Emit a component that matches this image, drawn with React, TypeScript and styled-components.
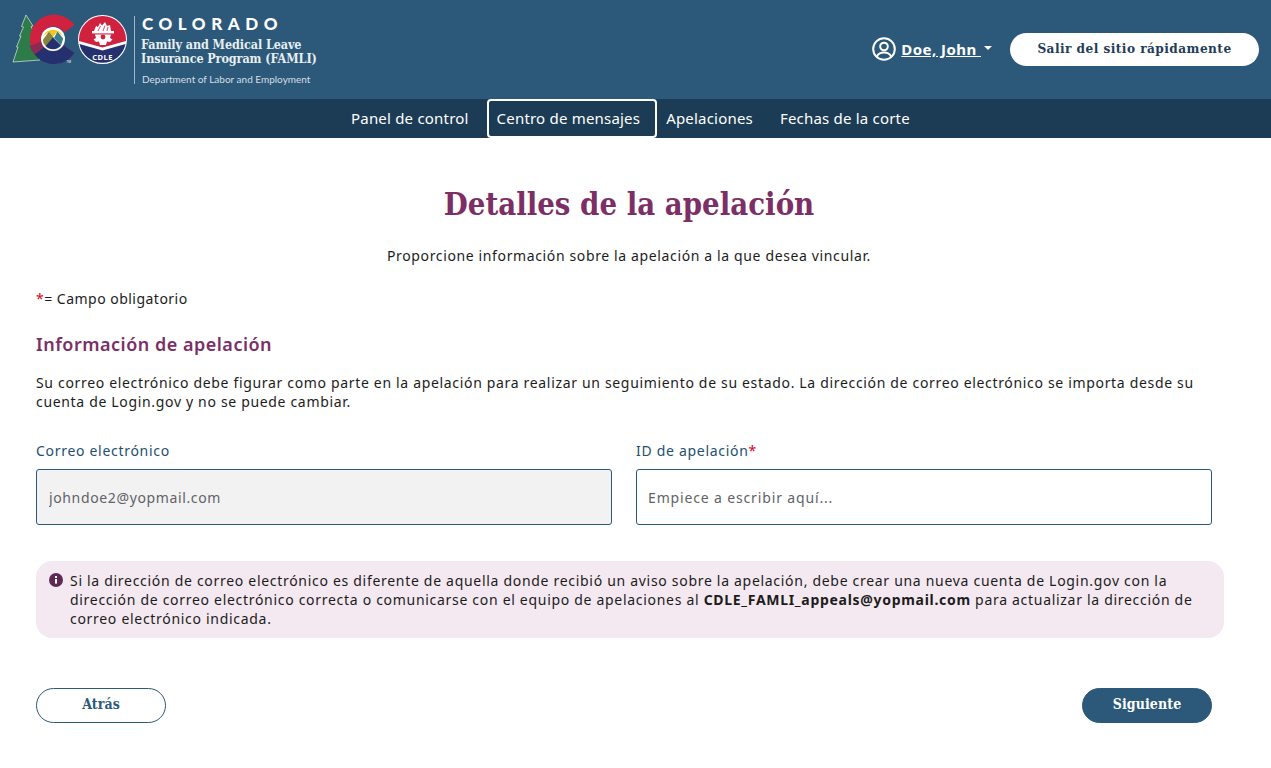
import styled, { createGlobalStyle } from 'styled-components';

const GlobalStyle = createGlobalStyle`
  html, body {
    margin: 0;
    padding: 0;
    background: #fff;
    font-family: 'Noto Sans', sans-serif;
    color: #1c1c1c;
    letter-spacing: 0.63px;
  }
`;

const slab = `'DejaVu Serif Condensed', 'DejaVu Serif', serif`;

const Header = styled.header`
  height: 99px;
  background: #2c5979;
  display: flex;
  justify-content: space-between;
  padding: 0 12px;
  box-sizing: border-box;
  letter-spacing: 0;
`;

const Brand = styled.div`
  display: flex;
  align-items: flex-start;
  padding-top: 14px;
`;

const BrandDivider = styled.div`
  width: 1px;
  height: 68px;
  background: #9fb5c5;
  margin: 2px 7px 0 6px;
`;

const BrandText = styled.div`
  display: flex;
  flex-direction: column;
  color: #fff;
  padding-top: 1px;
`;

const BrandState = styled.div`
  font: 900 17px/17px 'Lato', sans-serif;
  letter-spacing: 5.55px;
  margin-bottom: 6px;
`;

const BrandProgram = styled.div`
  font: 700 12.5px/14px ${slab};
  color: #e8eef2;
  white-space: nowrap;
  letter-spacing: -0.1px;
  margin-left: -1px;
`;

const BrandDept = styled.div`
  font: 400 10px/12px 'Lato', sans-serif;
  color: #d5dfe6;
  margin-top: 7px;
`;

const HeaderActions = styled.div`
  display: flex;
  align-items: center;
  padding-bottom: 1px;
`;

const UserMenu = styled.a`
  display: flex;
  align-items: center;
  color: #fff;
  font: 700 15px/20px 'Noto Sans', sans-serif;
  letter-spacing: 0.45px;
  margin-right: 17px;
`;

const UserName = styled.span`
  text-decoration: underline;
  white-space: pre;
  margin: 0 3px 0 5px;
`;

const Caret = styled.span`
  width: 0;
  height: 0;
  border-left: 4px solid transparent;
  border-right: 4px solid transparent;
  border-top: 4px solid #fff;
  margin: -3px 1px 0 0;
`;

const QuickExit = styled.button`
  width: 249px;
  height: 33px;
  border: none;
  border-radius: 17px;
  background: #fff;
  color: #1f3d57;
  font: 700 13.5px/16px ${slab};
  letter-spacing: 0.45px;
  padding: 0 0 2px;
`;

const NavBar = styled.nav`
  height: 39px;
  background: #1c3c56;
  display: flex;
  align-items: stretch;
  padding-left: 340px;
  letter-spacing: 0;
`;

const NavItem = styled.a<{ $focused?: boolean; $gap: number }>`
  display: flex;
  align-items: center;
  box-sizing: border-box;
  color: #fff;
  font: 400 15px/20px 'Noto Sans', sans-serif;
  letter-spacing: 0.2px;
  padding: ${({ $focused }) => ($focused ? '0 15px 2px 8px' : '0 9px 2px')};
  margin-right: ${({ $gap }) => $gap}px;
  border: 2px solid ${({ $focused }) => ($focused ? '#fff' : 'transparent')};
  border-radius: 4px;
  white-space: nowrap;
`;

const Main = styled.main`
  padding: 0 47px 0 36px;
`;

const Title = styled.h1`
  margin: 45px 0 0;
  padding-right: 2px;
  text-align: center;
  font: 700 30.8px/42px ${slab};
  letter-spacing: 0;
  color: #7b2f66;
`;

const Lead = styled.p`
  margin: 20px 0 0;
  padding-right: 2px;
  text-align: center;
  font-size: 14px;
  line-height: 22px;
`;

const Required = styled.span`
  color: #e0001b;
`;

const RequiredNote = styled.p`
  margin: 21px 0 0;
  font-size: 14px;
  line-height: 22px;
  letter-spacing: 0.48px;
`;

const SectionTitle = styled.h2`
  margin: 21px 0 0;
  font: 600 18px/26px 'Noto Sans', sans-serif;
  letter-spacing: 0.5px;
  color: #7b2f66;
`;

const Body = styled.p`
  margin: 16px 0 0;
  font-size: 14px;
  line-height: 19px;
  letter-spacing: 0.67px;
`;

const FieldGrid = styled.div`
  display: grid;
  grid-template-columns: 576px 576px;
  column-gap: 24px;
  margin-top: 29px;
`;

const Field = styled.label`
  display: flex;
  flex-direction: column;
`;

const FieldLabel = styled.span`
  font-size: 14px;
  line-height: 22px;
  color: #24506f;
  margin-bottom: 7px;
  letter-spacing: 0.7px;
`;

const Input = styled.input`
  box-sizing: border-box;
  height: 56px;
  border: 1px solid #2c5979;
  border-radius: 3px;
  padding: 0 11px;
  font: 14px 'Noto Sans', sans-serif;
  letter-spacing: 0.63px;
  color: #5f6368;
  background: #fff;
  &:disabled {
    background: #f2f2f2;
    padding-left: 12px;
  }
  &::placeholder {
    color: #5f6368;
    opacity: 1;
    letter-spacing: 0.85px;
  }
`;

const Alert = styled.div`
  display: flex;
  align-items: flex-start;
  margin: 36px 0 0;
  padding: 10px 20px 10px 13px;
  background: #f4e9f1;
  border-radius: 16px;
  font-size: 14px;
  line-height: 19px;
  letter-spacing: 0.7px;
`;

const AlertIcon = styled.svg`
  flex: none;
  width: 14px;
  height: 14px;
  margin: 2px 7px 0 0;
`;

const Actions = styled.div`
  display: flex;
  justify-content: space-between;
  margin-top: 50px;
  padding: 0 12px 45px 0;
`;

const Button = styled.button<{ $primary?: boolean }>`
  width: 130px;
  height: 35px;
  border: 1px solid #2c5979;
  border-radius: 18px;
  background: ${({ $primary }) => ($primary ? '#2c5979' : '#fff')};
  color: ${({ $primary }) => ($primary ? '#fff' : '#2c5979')};
  font: 700 14px/16px ${slab};
  letter-spacing: 0.1px;
  padding: 0 0 3px;
`;

const Logo = () => (
  <svg width="116" height="52" viewBox="12 14 116 52">
    {/* tree, tucked behind the C */}
    <path
      d="M26 15 L33 26 L31 26.5 L36 36 L40 60 L13 62 L18 47 L16.5 47 L21 36 L19.5 36 L23.5 27 L21.5 26.5 Z"
      fill="#2e7b4a"
      stroke="#dfe8e4"
      strokeWidth="0.7"
    />
    {/* C: red upper arm, plum tail, navy lower arm */}
    <path d="M74.5 25 A24.5 24.5 0 1 0 74.5 53 L64 45.5 A12.5 12.5 0 1 1 64 32.5 Z" fill="#d0213f" />
    <path d="M34.5 54.5 A24.5 24.5 0 0 0 74.5 53 L64 45.5 A12.5 12.5 0 0 1 44 47 Z" fill="#25306f" />
    <path d="M29.7 46 L42 41 L44 47 L34.5 54.5 A24.5 24.5 0 0 1 29.7 46 Z" fill="#8a2a55" />
    {/* sun and mountains */}
    <circle cx="53" cy="39" r="12" fill="#fff" />
    <path d="M43.5 36 A10.3 10.3 0 0 1 62.5 36 L57.5 31.5 L53 36.5 L49 31.5 Z" fill="#f5c518" />
    <path d="M42.8 40 L49 31.5 L54 38 L45.5 46 A10.3 10.3 0 0 1 42.8 40 Z" fill="#84873b" />
    <path d="M45.5 46 L53 37.5 L61 45.5 A10.3 10.3 0 0 1 45.5 46 Z" fill="#25306f" />
    <path d="M57.5 31.5 L63.2 38.5 L61 45.5 L54 38 Z" fill="#3c7d8b" />
    <text x="66.5" y="63" fontFamily="'Noto Sans', sans-serif" fontSize="3" fill="#fff">TM</text>
    {/* CDLE seal */}
    <circle cx="102.5" cy="39.5" r="24.5" fill="#fff" />
    <path d="M79 39.5 A23.5 23.5 0 0 1 126 39.5 L126 41 L102.5 47.5 L79 41 Z" fill="#d0213f" />
    <path d="M79.5 44 L102.5 50.5 L125.5 44 A23.5 23.5 0 0 1 79.5 44 Z" fill="#25306f" />
    <path d="M94 31 L96 26 L98 27 L100 23 L102 25.5 L105 22 L107 26 L110 25 L111 31 Z" fill="#fff" />
    <path d="M98 31 L100.5 26 M103 31 L105 25.5 M107 31 L108 27" stroke="#d0213f" strokeWidth="0.8" />
    <rect x="92" y="31" width="22" height="2.4" fill="#fff" />
    <path d="M95 34.5 H111 L110 38 L112.5 39.5 L110 42 L107 41.5 L106 45 H100 L99 41.5 L96 42 L93.5 39.5 L96 38 Z" fill="#fff" />
    <circle cx="103" cy="37" r="2.4" fill="#d0213f" />
    <text x="102.5" y="59.5" textAnchor="middle" fontFamily="'Noto Sans', sans-serif" fontSize="7.5" fontWeight="700" letterSpacing="0.5" fill="#fff">CDLE</text>
  </svg>
);

const UserIcon = () => (
  <svg width="24" height="24" viewBox="0 0 24 24" fill="none" stroke="#fff" strokeWidth="2">
    <circle cx="12" cy="12" r="10.8" />
    <circle cx="12" cy="9.5" r="3.8" />
    <path d="M5 19.5 C6.5 16 9 15.6 12 15.6 C15 15.6 17.5 16 19 19.5" />
  </svg>
);

const App = () => (
  <>
    <GlobalStyle />
    <Header>
      <Brand>
        <Logo />
        <BrandDivider />
        <BrandText>
          <BrandState>COLORADO</BrandState>
          <BrandProgram>Family and Medical Leave</BrandProgram>
          <BrandProgram>Insurance Program (FAMLI)</BrandProgram>
          <BrandDept>Department of Labor and Employment</BrandDept>
        </BrandText>
      </Brand>
      <HeaderActions>
        <UserMenu>
          <UserIcon />
          <UserName>Doe, John </UserName>
          <Caret />
        </UserMenu>
        <QuickExit>Salir del sitio rápidamente</QuickExit>
      </HeaderActions>
    </Header>
    <NavBar>
      <NavItem $gap={7}>Panel de control</NavItem>
      <NavItem $focused $gap={-2}>Centro de mensajes</NavItem>
      <NavItem $gap={5}>Apelaciones</NavItem>
      <NavItem $gap={0}>Fechas de la corte</NavItem>
    </NavBar>
    <Main>
      <Title>Detalles de la apelación</Title>
      <Lead>Proporcione información sobre la apelación a la que desea vincular.</Lead>
      <RequiredNote><Required>*</Required>= Campo obligatorio</RequiredNote>
      <SectionTitle>Información de apelación</SectionTitle>
      <Body>
        Su correo electrónico debe figurar como parte en la apelación para realizar un seguimiento de su estado. La dirección de correo electrónico se importa desde su cuenta de Login.gov y no se puede cambiar.
      </Body>
      <FieldGrid>
        <Field>
          <FieldLabel>Correo electrónico</FieldLabel>
          <Input disabled value="johndoe2@yopmail.com" />
        </Field>
        <Field>
          <FieldLabel>ID de apelación<Required>*</Required></FieldLabel>
          <Input placeholder="Empiece a escribir aquí..." />
        </Field>
      </FieldGrid>
      <Alert>
        <AlertIcon viewBox="0 0 14 14">
          <circle cx="7" cy="7" r="7" fill="#5e2a55" />
          <rect x="6" y="6" width="2" height="4.6" fill="#fff" />
          <rect x="6" y="3" width="2" height="2" fill="#fff" />
        </AlertIcon>
        <div>
          Si la dirección de correo electrónico es diferente de aquella donde recibió un aviso sobre la apelación, debe crear una nueva cuenta de Login.gov con la dirección de correo electrónico correcta o comunicarse con el equipo de apelaciones al <strong>CDLE_FAMLI_appeals@yopmail.com</strong> para actualizar la dirección de correo electrónico indicada.
        </div>
      </Alert>
      <Actions>
        <Button>Atrás</Button>
        <Button $primary>Siguiente</Button>
      </Actions>
    </Main>
  </>
);

export default App;
